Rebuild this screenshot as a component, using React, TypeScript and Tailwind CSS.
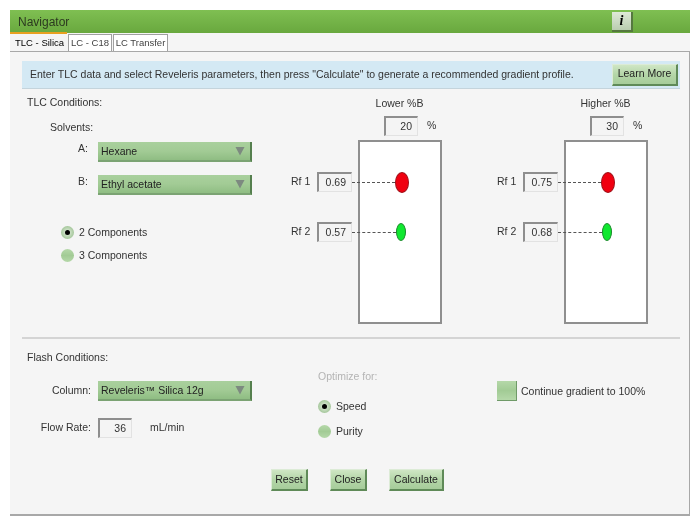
// Navigator dialog: TLC gradient setup

const btnClass =
  "h-[22px] flex items-center justify-center bg-gradient-to-b from-[#cfe6c4] via-[#b4d6a8] to-[#a6cc9a] border-t border-l border-[#dcebd6] border-r-2 border-b-2 border-r-[#5f8a58] border-b-[#5f8a58] text-[10.5px] text-[#222]";

// ── Select ─────────────────────────────────────
function Select({ value }: { value: string }) {
  return (
    <div className="w-[154px] h-[20px] pl-[3px] pr-[5px] flex items-center justify-between bg-gradient-to-b from-[#a9d09d] via-[#a2cb95] to-[#8fbd83] border-r-2 border-b-2 border-r-[#557f4e] border-b-[#7ba373] text-[10.5px] text-[#222]">
      <span className="pt-[2px]">{value}</span>
      <svg width="10" height="10" viewBox="0 0 10 10">
        <path d="M0.5 1 L9.5 1 L5 9.5 Z" fill="#7d8a80" />
      </svg>
    </div>
  );
}

// ── Sunken number box ──────────────────────────
function NumBox({ value, className }: { value: string; className: string }) {
  return (
    <div
      className={`h-[20px] flex items-center justify-end pr-[5px] bg-[#f4f4f4] border-t-2 border-l-2 border-t-[#8e8e8e] border-l-[#8e8e8e] border-r border-b border-r-[#e2e2e2] border-b-[#e2e2e2] text-[10.5px] text-[#333] ${className}`}
    >
      {value}
    </div>
  );
}

// ── Radio ──────────────────────────────────────
function Radio({ label, checked }: { label: string; checked?: boolean }) {
  return (
    <div className="h-[13px] flex items-center gap-[5px] text-[10.5px] text-[#333]">
      <span
        className={`w-[13px] h-[13px] rounded-full flex items-center justify-center ${
          checked
            ? "bg-[radial-gradient(circle,#e8f2e4_0%,#a5c79b_70%)]"
            : "bg-gradient-to-b from-[#b5d8a9] via-[#a2cb95] to-[#b5d8a9]"
        }`}
      >
        {checked && <span className="w-[5px] h-[5px] rounded-full bg-black" />}
      </span>
      {label}
    </div>
  );
}

// ── TLC plate with two Rf spots ────────────────
function RfRow({
  label,
  value,
  line,
  spot,
}: {
  label: string;
  value: string;
  line: string;
  spot: React.ReactNode;
}) {
  return (
    <div className="h-[20px] flex items-center">
      <span className="w-[26px] text-[10.5px] text-[#333]">{label}</span>
      <NumBox value={value} className="w-[35px]" />
      <div className={`h-0 border-t border-dashed border-[#555] ${line}`} />
      {spot}
    </div>
  );
}

function Plate({
  title,
  pct,
  rf1,
  rf2,
  className,
}: {
  title: string;
  pct: string;
  rf1: string;
  rf2: string;
  className: string;
}) {
  return (
    <div className={className}>
      <div className="h-[15px] ml-[67px] w-[83px] text-center text-[10.5px] text-[#333] leading-[15px]">
        {title}
      </div>
      <div className="mt-[5px] ml-[93px] flex items-center h-[20px]">
        <NumBox value={pct} className="w-[34px]" />
        <span className="ml-[9px] text-[10.5px] text-[#333]">%</span>
      </div>
      <div className="mt-[4px] grid">
        <div className="col-start-1 row-start-1 ml-[67px] w-[84px] h-[184px] bg-white border-2 border-[#8f8f8f]" />
        <div className="col-start-1 row-start-1 pt-[32px] flex flex-col gap-[30px]">
          <RfRow
            label={"Rf 1"}
            value={rf1}
            line="w-[43px]"
            spot={
              <span className="w-[14px] h-[21px] rounded-[50%] bg-[#f00010] border border-[#a01018]" />
            }
          />
          <RfRow
            label={"Rf 2"}
            value={rf2}
            line="w-[44px]"
            spot={
              <span className="w-[10px] h-[18px] rounded-[50%] bg-[#10e830] border border-[#1a8a2a]" />
            }
          />
        </div>
      </div>
    </div>
  );
}

export default function App() {
  return (
    <div className="w-[700px] h-[524px] bg-white pt-[10px] pl-[10px] font-['Liberation_Sans',sans-serif] blur-[0.35px]">
      {/* Title bar */}
      <div className="w-[680px] h-[23px] pl-[8px] pr-[57px] flex items-center justify-between bg-gradient-to-b from-[#7fbf52] to-[#69a83e] text-[12px] text-[#2c3a20]">
        <span>Navigator</span>
        <div className="w-[21px] h-[20px] flex items-center justify-center bg-gradient-to-b from-[#dfe9d8] to-[#b9cdaf] border-r-2 border-b-2 border-r-[#55783f] border-b-[#55783f] text-[14px] font-bold italic font-['Liberation_Serif',serif] text-black">
          i
        </div>
      </div>

      {/* Tabs */}
      <div className="h-[18px] flex items-end bg-[#f5f5f5] w-[680px] text-[9.5px]">
        <div className="w-[57px] h-[19px] -mt-[1px] pl-[5px] leading-[18px] bg-[#f5f5f5] border-t-2 border-t-[#e8a020] text-black">
          TLC - Silica
        </div>
        <div className="w-[44px] h-[17px] ml-[1px] text-center leading-[16px] bg-white border-t border-x border-[#a0a0a0] text-[#444]">
          LC - C18
        </div>
        <div className="w-[55px] h-[17px] ml-[1px] text-center leading-[16px] bg-white border-t border-x border-[#a0a0a0] text-[#444]">
          LC Transfer
        </div>
      </div>

      {/* Panel */}
      <div className="w-[680px] h-[465px] bg-[#f5f5f5] border-t border-r border-b-2 border-[#a8a8a8] border-l-0 pt-[9px] pl-[12px] text-[10.5px] text-[#333]">
        {/* Info bar */}
        <div className="w-[658px] h-[28px] pl-[8px] pr-[2px] flex items-center justify-between bg-[#d4e9f4] border-b border-[#c4d4dc] text-[#333]">
          <span>
            {'Enter TLC data and select Reveleris parameters, then press "Calculate" to generate a recommended gradient profile.'}
          </span>
          <div className={`${btnClass} w-[66px]`}>Learn More</div>
        </div>

        {/* TLC conditions */}
        <div className="h-[250px] flex border-b-2 border-[#d4d4d4] w-[658px]">
          <div className="w-[269px] pl-[5px] pt-[6px]">
            <div className="h-[15px] leading-[15px]">TLC Conditions:</div>
            <div className="mt-[10px] ml-[23px] h-[15px] leading-[15px]">Solvents:</div>
            <div className="mt-[7px] flex items-center h-[20px]">
              <span className="w-[61px] text-right pb-[6px]">A:</span>
              <span className="w-[10px]" />
              <Select value="Hexane" />
            </div>
            <div className="mt-[13px] flex items-center h-[20px]">
              <span className="w-[61px] text-right pb-[6px]">B:</span>
              <span className="w-[10px]" />
              <Select value="Ethyl acetate" />
            </div>
            <div className="mt-[31px] ml-[34px] flex flex-col gap-[10px]">
              <Radio label="2 Components" checked />
              <Radio label="3 Components" />
            </div>
          </div>
          <Plate
            title="Lower %B"
            pct="20"
            rf1="0.69"
            rf2="0.57"
            className="w-[206px] pt-[7px]"
          />
          <Plate
            title="Higher %B"
            pct="30"
            rf1="0.75"
            rf2="0.68"
            className="w-[183px] pt-[7px]"
          />
        </div>

        {/* Flash conditions */}
        <div className="w-[658px] pt-[11px] flex flex-wrap">
          <div className="w-[296px] pl-[5px]">
            <div className="h-[15px] leading-[15px]">Flash Conditions:</div>
            <div className="mt-[16px] flex items-center h-[20px]">
              <span className="w-[64px] text-right">Column:</span>
              <span className="w-[7px]" />
              <Select value={"Reveleris\u2122 Silica 12g"} />
            </div>
            <div className="mt-[17px] flex items-center h-[20px]">
              <span className="w-[64px] text-right">Flow Rate:</span>
              <span className="w-[7px]" />
              <NumBox value="36" className="w-[34px]" />
              <span className="ml-[18px]">mL/min</span>
            </div>
          </div>
          <div className="w-[179px] pt-[19px]">
            <div className="text-[#b4b4b4] h-[15px] leading-[15px]">Optimize for:</div>
            <div className="mt-[16px] flex flex-col gap-[12px]">
              <Radio label="Speed" checked />
              <Radio label="Purity" />
            </div>
          </div>
          <div className="flex items-start pt-[31px] gap-[4px]">
            <span className="w-[20px] h-[20px] bg-gradient-to-b from-[#b5d8a9] via-[#a2cb95] to-[#b5d8a9] border-r border-b border-[#6f9a68]" />
            <span className="leading-[20px]">Continue gradient to 100%</span>
          </div>
          <div className="w-[658px] mt-[31px] pl-[249px] flex gap-[22px]">
            <div className={`${btnClass} w-[37px]`}>Reset</div>
            <div className={`${btnClass} w-[37px]`}>Close</div>
            <div className={`${btnClass} w-[55px]`}>Calculate</div>
          </div>
        </div>
      </div>
    </div>
  );
}
